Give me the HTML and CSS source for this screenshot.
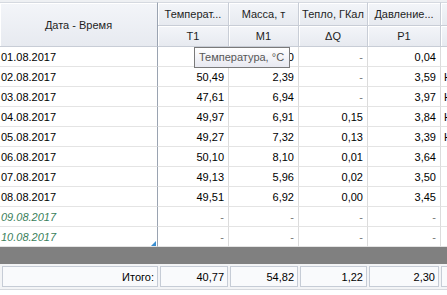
FILE: index.html
```html
<!DOCTYPE html>
<html lang="ru">
<head>
    <meta charset="UTF-8">
    <title>Показания</title>
    <link rel="stylesheet" href="styles.css">
</head>
<body>
    <div class="grid">
        <table class="data">
            <colgroup>
                <col class="c-date">
                <col class="c-num">
                <col class="c-mass">
                <col class="c-heat">
                <col class="c-press">
                <col class="c-extra">
            </colgroup>
            <thead>
                <tr class="head-top">
                    <th rowspan="2" class="date-head">Дата - Время</th>
                    <th>Температ...</th>
                    <th>Масса, т</th>
                    <th>Тепло, ГКал</th>
                    <th>Давление...</th>
                    <th></th>
                </tr>
                <tr class="head-sub">
                    <th>Т1</th>
                    <th>М1</th>
                    <th>ΔQ</th>
                    <th>P1</th>
                    <th></th>
                </tr>
            </thead>
            <tbody>
                <tr><td class="date">01.08.2017</td><td>50,00</td><td>4,10</td><td class="dash">-</td><td>0,04</td><td class="extra"></td></tr>
                <tr><td class="date">02.08.2017</td><td>50,49</td><td>2,39</td><td class="dash">-</td><td>3,59</td><td class="extra">Норма</td></tr>
                <tr><td class="date">03.08.2017</td><td>47,61</td><td>6,94</td><td class="dash">-</td><td>3,97</td><td class="extra">Норма</td></tr>
                <tr><td class="date">04.08.2017</td><td>49,97</td><td>6,91</td><td>0,15</td><td>3,84</td><td class="extra">Норма</td></tr>
                <tr><td class="date">05.08.2017</td><td>49,27</td><td>7,32</td><td>0,13</td><td>3,39</td><td class="extra">Норма</td></tr>
                <tr><td class="date">06.08.2017</td><td>50,10</td><td>8,10</td><td>0,01</td><td>3,64</td><td class="extra"></td></tr>
                <tr><td class="date">07.08.2017</td><td>49,13</td><td>5,96</td><td>0,02</td><td>3,50</td><td class="extra"></td></tr>
                <tr><td class="date">08.08.2017</td><td>49,51</td><td>6,92</td><td>0,00</td><td>3,45</td><td class="extra"></td></tr>
                <tr class="planned"><td class="date">09.08.2017</td><td class="dash">-</td><td class="dash">-</td><td class="dash">-</td><td class="dash">-</td><td class="extra"></td></tr>
                <tr class="planned"><td class="date last">10.08.2017<span class="corner"></span></td><td class="dash">-</td><td class="dash">-</td><td class="dash">-</td><td class="dash">-</td><td class="extra"></td></tr>
            </tbody>
        </table>

        <div class="tooltip">Температура, °C</div>

        <div class="band"></div>

        <div class="totals">
            <div class="total label">Итого:</div>
            <div class="total w-num">40,77</div>
            <div class="total w-mass">54,82</div>
            <div class="total w-heat">1,22</div>
            <div class="total w-press">2,30</div>
            <div class="total w-extra"></div>
        </div>
    </div>
</body>
</html>
```

FILE: styles.css
```css
/* General */
body {
    margin: 0;
    background: #fff;
    font-family: 'Liberation Sans', Arial, sans-serif;
    font-size: 11px;
    color: #000;
}

.grid {
    position: relative;
    width: 447px;
    height: 295px;
    overflow: hidden;
    border-top: 2px solid #eef0f3;
}

/* Table */
.data {
    border-collapse: separate;
    border-spacing: 0;
    table-layout: fixed;
    width: 501px;
}

.c-date { width: 158px; }
.c-num { width: 71px; }
.c-mass { width: 70px; }
.c-heat { width: 69px; }
.c-press { width: 73px; }
.c-extra { width: 60px; }

th {
    font-weight: normal;
    color: #1e1e1e;
    background: linear-gradient(#f3f5f9, #e7eaf0);
    border-right: 1px solid #c8cdd6;
    border-bottom: 1px solid #c8cdd6;
    box-shadow: inset 1px 1px 0 #fff;
    padding: 0 3px;
    white-space: nowrap;
    overflow: hidden;
    text-align: center;
}

.head-top th {
    height: 22px;
    border-top: 1px solid #d5d9e0;
}

.head-sub th {
    height: 20px;
}

.date-head {
    border-right-color: #9aa3b1;
}

td {
    height: 19px;
    padding: 0 4px;
    border-right: 1px solid #dcdcdc;
    border-bottom: 1px solid #e4e4e4;
    text-align: right;
    white-space: nowrap;
    overflow: hidden;
}

td.date {
    position: relative;
    text-align: left;
    padding-left: 1px;
    border-right: 1px solid #9aa3b1;
}

td.dash {
    color: #777;
}

td.extra {
    text-align: left;
    padding-left: 3px;
}

.planned td.date {
    font-style: italic;
    color: #3b7f5c;
}

.corner {
    position: absolute;
    right: 1px;
    bottom: 0;
    width: 0;
    height: 0;
    border-left: 5px solid transparent;
    border-bottom: 5px solid #3a8ed0;
}

/* Tooltip */
.tooltip {
    position: absolute;
    left: 194px;
    top: 45px;
    width: 86px;
    height: 19px;
    line-height: 19px;
    padding: 0 4px;
    color: #575757;
    background: linear-gradient(#ffffff, #e8e9f1);
    border: 1px solid #7a7a7a;
    white-space: nowrap;
}

/* Bottom */
.band {
    height: 17px;
    background: #808080;
}

.totals {
    display: flex;
    gap: 2px;
    padding: 2px 0 2px 2px;
    background: #f3f4f6;
    border-bottom: 1px solid #d6d9de;
}

.total {
    flex: none;
    height: 21px;
    line-height: 21px;
    padding: 0 3px;
    box-sizing: border-box;
    text-align: right;
    background: #f9fafc;
    border: 1px solid #c6ccd6;
}

.label { width: 156px; }
.w-num { width: 68px; }
.w-mass { width: 68px; }
.w-heat { width: 67px; }
.w-press { width: 70px; }
.w-extra { width: 60px; }
```
